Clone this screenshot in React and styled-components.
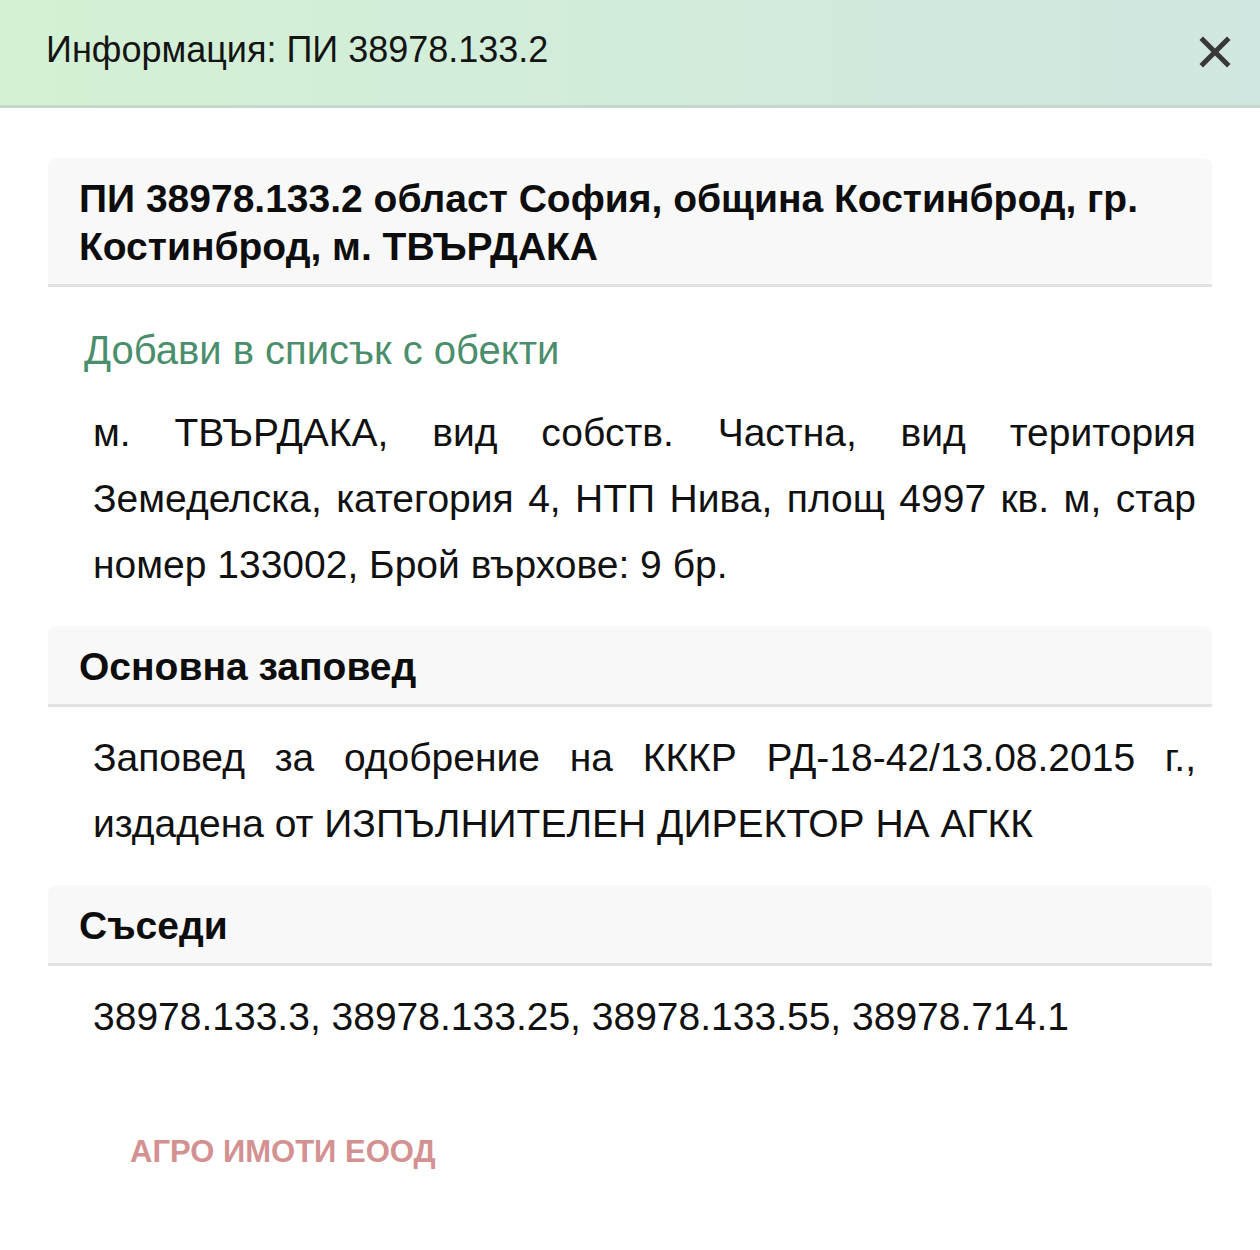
import React from "react";
import styled, { createGlobalStyle } from "styled-components";

const Global = createGlobalStyle`
  html, body {
    margin: 0;
    padding: 0;
    background: #ffffff;
    font-family: "Liberation Sans", Arial, sans-serif;
    color: #111111;
  }
`;

const Header = styled.div`
  height: 105px;
  border-bottom: 3px solid #c4d8cc;
  background: linear-gradient(to right, #d3f1d4, #d0e6e0);
  display: flex;
  align-items: center;
  justify-content: space-between;
  padding: 0 28px 0 46px;
`;

const Title = styled.div`
  font-size: 36px;
  color: #141414;
  padding-bottom: 6px;
`;

const Close = styled.button`
  border: none;
  background: none;
  padding: 0;
  width: 34px;
  height: 34px;
  cursor: pointer;
  display: flex;
  margin-bottom: 2px;
`;

const Body = styled.div`
  padding: 50px 48px 60px;
`;

const SectionHead = styled.div`
  background: #f8f8f8;
  border-radius: 8px 8px 0 0;
  border-bottom: 3px solid #e2e2e2;
  padding: 17px 31px 13px;
  font-size: 39px;
  font-weight: bold;
  line-height: 48px;
  color: #0d0d0d;
`;

const AddLink = styled.a`
  display: block;
  font-size: 40px;
  color: #4b8e6c;
  text-decoration: none;
  padding: 41px 36px 0;
  line-height: 44px;
  cursor: pointer;
`;

const Para = styled.p`
  margin: 0;
  padding: ${(p) => p.top || 18}px 16px 28px 45px;
  font-size: 39px;
  line-height: 66px;
  text-align: justify;
  color: #111111;
`;

const Footer = styled.div`
  padding: 56px 0 0 82px;
  font-size: 31px;
  line-height: 36px;
  font-weight: bold;
  color: #d39191;
`;

export default function App() {
  return (
    <>
      <Global />
      <Header>
        <Title>Информация: ПИ 38978.133.2</Title>
        <Close aria-label="close">
          <svg width="34" height="34" viewBox="0 0 34 34">
            <path
              d="M5 5 L29 29 M29 5 L5 29"
              stroke="#383838"
              strokeWidth="5"
              strokeLinecap="square"
            />
          </svg>
        </Close>
      </Header>
      <Body>
        <SectionHead>
          ПИ 38978.133.2 област София, община Костинброд, гр. Костинброд, м.
          ТВЪРДАКА
        </SectionHead>
        <AddLink>Добави в списък с обекти</AddLink>
        <Para top={28}>
          м. ТВЪРДАКА, вид собств. Частна, вид територия Земеделска, категория
          4, НТП Нива, площ 4997 кв. м, стар номер 133002, Брой върхове: 9 бр.
        </Para>
        <SectionHead>Основна заповед</SectionHead>
        <Para>
          Заповед за одобрение на КККР РД-18-42/13.08.2015 г., издадена от
          ИЗПЪЛНИТЕЛЕН ДИРЕКТОР НА АГКК
        </Para>
        <SectionHead>Съседи</SectionHead>
        <Para>38978.133.3, 38978.133.25, 38978.133.55, 38978.714.1</Para>
        <Footer>АГРО ИМОТИ ЕООД</Footer>
      </Body>
    </>
  );
}
